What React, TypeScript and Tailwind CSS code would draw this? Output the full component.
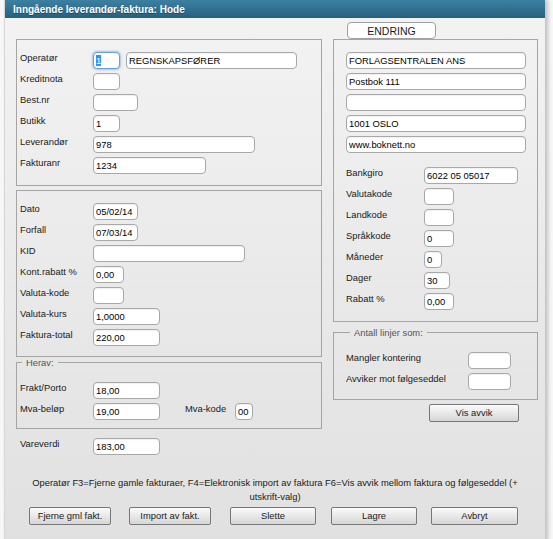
import React from "react";

const inputCls =
  "h-[17px] rounded-[4px] border border-[#a8a8a8] bg-white px-[2px] text-[9.4px] leading-[15px] text-black outline-none shadow-[inset_0_1px_1px_rgba(0,0,0,0.06)]";

function Inp({ v = "", className = "" }: { v?: string; className?: string }) {
  return <input readOnly value={v} className={`${inputCls} ${className}`} />;
}

function Row({
  label,
  lw = "w-[76px] pl-[3px]",
  children,
}: {
  label: string;
  lw?: string;
  children: React.ReactNode;
}) {
  return (
    <div className="flex h-[17px] items-start">
      <div className={`${lw} shrink-0 whitespace-nowrap leading-[12px] text-[#1a1a1a]`}>{label}</div>
      {children}
    </div>
  );
}

function Btn({ label, className = "" }: { label: string; className?: string }) {
  return (
    <button
      className={`h-[18px] shrink-0 rounded-[2px] border border-[#777] bg-gradient-to-b from-[#fbfbfb] to-[#d6d6d6] text-[9.4px] leading-[16px] text-[#1a1a1a] ${className}`}
    >
      {label}
    </button>
  );
}

export default function App() {
  return (
    <div className="h-[539px] w-[553px] overflow-hidden bg-[#f7f7f7] font-['Liberation_Sans',Arial,sans-serif] text-[9.4px]">
      <div className="ml-[5px] flex h-[560px] w-[540px] flex-col bg-gradient-to-b from-[#f3f3f3] to-[#e0e0e0] shadow-[3px_0_4px_rgba(0,0,0,0.22),-1px_0_1px_rgba(0,0,0,0.12)]">
        {/* header */}
        <div className="flex h-[18px] items-center bg-gradient-to-b from-[#3c80a1] to-[#27607f] pl-[8px] text-[10px] font-bold text-white [text-shadow:0_1px_0_rgba(0,0,0,0.35)]">
          Inngående leverandør-faktura: Hode
        </div>

        <div className="flex pl-[11px] pt-[4px]">
          {/* left column */}
          <div className="flex w-[306px] flex-col pt-[17px]">
            <fieldset className="border border-[#a5a5a5] pb-[11px] pt-[12px]">
              <div className="flex flex-col gap-[4px]">
                <Row label="Operatør">
                  <div className="flex h-[17px] w-[27px] items-center rounded-[4px] border border-[#6d9fd3] bg-white px-[2px] shadow-[0_0_2px_1px_rgba(80,140,210,0.45)]">
                    <span className="bg-[#3390ff] leading-[11px] text-white">1</span>
                  </div>
                  <Inp v="REGNSKAPSFØRER" className="ml-[6px] w-[171px]" />
                </Row>
                <Row label="Kreditnota">
                  <Inp className="w-[27px]" />
                </Row>
                <Row label="Best.nr">
                  <Inp className="w-[45px]" />
                </Row>
                <Row label="Butikk">
                  <Inp v="1" className="w-[27px]" />
                </Row>
                <Row label="Leverandør">
                  <Inp v="978" className="w-[162px]" />
                </Row>
                <Row label="Fakturanr">
                  <Inp v="1234" className="w-[113px]" />
                </Row>
              </div>
            </fieldset>

            <fieldset className="mt-[4px] border border-[#a5a5a5] pb-[10px] pt-[12px]">
              <div className="flex flex-col gap-[4px]">
                <Row label="Dato">
                  <Inp v="05/02/14" className="w-[45px]" />
                </Row>
                <Row label="Forfall">
                  <Inp v="07/03/14" className="w-[45px]" />
                </Row>
                <Row label="KID">
                  <Inp className="w-[152px]" />
                </Row>
                <Row label="Kont.rabatt %">
                  <Inp v="0,00" className="w-[31px]" />
                </Row>
                <Row label="Valuta-kode">
                  <Inp className="w-[31px]" />
                </Row>
                <Row label="Valuta-kurs">
                  <Inp v="1,0000" className="w-[67px]" />
                </Row>
                <Row label="Faktura-total">
                  <Inp v="220,00" className="w-[67px]" />
                </Row>
              </div>
            </fieldset>

            <fieldset className="border border-[#a5a5a5] pb-[8px]">
              <legend className="ml-[5px] px-[4px] leading-[11px] text-[#555]">Herav:</legend>
              <div className="flex flex-col gap-[4px] pt-[14px]">
                <Row label="Frakt/Porto">
                  <Inp v="18,00" className="w-[67px]" />
                </Row>
                <Row label="Mva-beløp">
                  <Inp v="19,00" className="w-[67px]" />
                  <div className="ml-[25px] w-[50px] leading-[12px] text-[#1a1a1a]">Mva-kode</div>
                  <Inp v="00" className="w-[18px] px-[1px]" />
                </Row>
              </div>
            </fieldset>

            <div className="mt-[9px]">
              <Row label="Vareverdi" lw="w-[77px] pl-[4px]">
                <Inp v="183,00" className="w-[67px]" />
              </Row>
            </div>
          </div>

          {/* right column */}
          <div className="ml-[11px] flex w-[205px] flex-col">
            <div className="ml-[14px] flex h-[17px] w-[89px] items-center justify-center rounded-[4px] border border-[#a0a0a0] bg-white text-[10.5px] leading-[12px] text-[#1a1a1a]">
              ENDRING
            </div>
            <fieldset className="border border-[#a5a5a5] pb-[11px] pl-[12px] pt-[12px]">
              <div className="flex flex-col gap-[4px]">
                <Inp v="FORLAGSENTRALEN ANS" className="w-[180px]" />
                <Inp v="Postbok 111" className="w-[180px]" />
                <Inp className="w-[180px]" />
                <Inp v="1001 OSLO" className="w-[180px]" />
                <Inp v="www.boknett.no" className="w-[180px]" />
              </div>
              <div className="mt-[14px] flex flex-col gap-[4px]">
                <Row label="Bankgiro" lw="w-[78px]">
                  <Inp v="6022 05 05017" className="w-[94px]" />
                </Row>
                <Row label="Valutakode" lw="w-[78px]">
                  <Inp className="w-[30px]" />
                </Row>
                <Row label="Landkode" lw="w-[78px]">
                  <Inp className="w-[30px]" />
                </Row>
                <Row label="Språkkode" lw="w-[78px]">
                  <Inp v="0" className="w-[30px]" />
                </Row>
                <Row label="Måneder" lw="w-[78px]">
                  <Inp v="0" className="w-[18px]" />
                </Row>
                <Row label="Dager" lw="w-[78px]">
                  <Inp v="30" className="w-[26px]" />
                </Row>
                <Row label="Rabatt %" lw="w-[78px]">
                  <Inp v="0,00" className="w-[30px]" />
                </Row>
              </div>
            </fieldset>

            <fieldset className="mt-[5px] border border-[#a5a5a5] pb-[9px] pl-[12px]">
              <legend className="ml-[4px] px-[4px] leading-[11px] text-[#555]">Antall linjer som:</legend>
              <div className="flex flex-col gap-[4px] pt-[14px]">
                <Row label="Mangler kontering" lw="w-[122px]">
                  <Inp className="w-[43px]" />
                </Row>
                <Row label="Avviker mot følgeseddel" lw="w-[122px]">
                  <Inp className="w-[43px]" />
                </Row>
              </div>
            </fieldset>

            <div className="mt-[4px] pl-[96px]">
              <Btn label="Vis avvik" className="w-[90px]" />
            </div>
          </div>
        </div>

        <div className="mt-[21px] text-center text-[9.4px] leading-[14px] text-[#1a1a1a]">
          Operatør F3=Fjerne gamle fakturaer, F4=Elektronisk import av faktura F6=Vis avvik mellom faktura og følgeseddel (+
          <br />
          utskrift-valg)
        </div>

        <div className="mt-[3px] flex pl-[24px]">
          <Btn label="Fjerne gml fakt." className="w-[82px]" />
          <Btn label="Import av fakt." className="ml-[18px] w-[82px]" />
          <Btn label="Slette" className="ml-[19px] w-[86px]" />
          <Btn label="Lagre" className="ml-[15px] w-[86px]" />
          <Btn label="Avbryt" className="ml-[14px] w-[87px]" />
        </div>
      </div>
    </div>
  );
}
